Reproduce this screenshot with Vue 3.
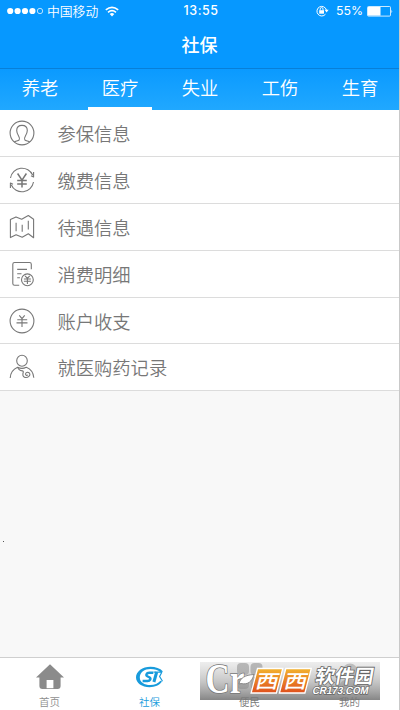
<script setup>
const tabs = ['养老', '医疗', '失业', '工伤', '生育']
const rows = [
  { icon: 'person', label: '参保信息' },
  { icon: 'pay', label: '缴费信息' },
  { icon: 'map', label: '待遇信息' },
  { icon: 'bill', label: '消费明细' },
  { icon: 'yen', label: '账户收支' },
  { icon: 'doctor', label: '就医购药记录' },
]
</script>

<template>
  <div class="screen">
    <header class="header">
      <div class="status">
        <div class="status-left">
          <svg class="dots" width="38" height="8" viewBox="0 0 38 8">
            <circle v-for="n in 4" :key="n" :cx="n * 7.4 - 4.2" cy="4" r="3.1" fill="#fff" />
            <circle cx="33" cy="4" r="2.7" fill="none" stroke="#fff" stroke-width=".7" />
          </svg>
          <span class="carrier">中国移动</span>
          <svg class="wifi" width="14" height="11" viewBox="0 0 14 11">
            <g fill="none" stroke="#fff" stroke-width="1.6">
              <path d="M.8 3.9Q7-1.3 13.2 3.9" />
              <path d="M3 6.3Q7 3 11 6.3" />
            </g>
            <path d="M4.7 8Q7 6.2 9.3 8L7 10.4Z" fill="#fff" />
          </svg>
        </div>
        <span class="time">13:55</span>
        <div class="status-right">
          <svg width="13" height="12" viewBox="0 0 13 12">
            <path d="M9.5 9.2A4.8 4.8 0 1 1 10.4 5" fill="none" stroke="#fff" stroke-width="1" />
            <path d="M8.6 4.8h4L10.6 7.4Z" fill="#fff" />
            <rect x="3.2" y="5.2" width="4.8" height="3.5" fill="#fff" />
            <path d="M4.2 5.4V4a1.4 1.4 0 0 1 2.8 0v1.4" fill="none" stroke="#fff" stroke-width=".9" />
          </svg>
          <span class="percent">55%</span>
          <svg class="battery" width="26" height="11" viewBox="0 0 26 11">
            <rect x=".5" y=".5" width="23" height="9.6" rx="1" fill="none" stroke="#fff" stroke-width=".8" />
            <rect x="1" y="1" width="12.5" height="8.6" fill="#fff" />
            <path d="M24.5 3.4q1.5 1.9 0 3.8Z" fill="#fff" />
          </svg>
        </div>
      </div>
      <h1 class="title">社保</h1>
    </header>

    <nav class="tabs">
      <div v-for="(tab, i) in tabs" :key="tab" class="tab" :class="{ active: i === 1 }">
        <span>{{ tab }}</span>
      </div>
    </nav>

    <ul class="list">
      <li v-for="row in rows" :key="row.icon" class="row">
        <svg class="row-icon" width="26" height="26" viewBox="0 0 26 26">
          <template v-if="row.icon === 'person'">
            <circle cx="13" cy="13" r="11.9" />
            <path d="M5.3 22.2c1-1.300 3.800-1 4.900-2.400.8-1 .2-2.400-.5-3.600C8.500 14.300 7.700 12.500 7.700 10.500 7.700 7.300 9.800 5.400 13 5.400s5.300 1.900 5.300 5.100c0 2-.8 3.800-2 5.700-.7 1.200-1.300 2.600-.5 3.600 1.100 1.400 3.900 1.100 4.900 2.400" />
          </template>
          <template v-else-if="row.icon === 'pay'">
            <path d="M1.500 11A11.700 11.700 0 0 1 23.800 8.300M24.500 15A11.700 11.700 0 0 1 2.200 17.700" />
            <path d="M24.600 5v5l-2.600-1.300M1.400 21v-5l2.600 1.300" />
            <path class="bold" d="m8.600 6.500 4.400 6.700 4.400-6.700M13 13v7.500M8.200 13.500h9.600M8.200 16.900h9.600" />
          </template>
          <template v-else-if="row.icon === 'map'">
            <path d="M1.400 5.600 7 2.900l5.700 2.400L19.300 1.500l5.300 3.700v18.500l-5.300-3.900-6.100 3.400-6.100-2.400-5.700 2.800Z" />
            <path d="M7.100 8.700v8.500M13.200 10.800v7M19.300 6.800v8.600" />
          </template>
          <template v-else-if="row.icon === 'bill'">
            <path d="M10.200 24.300H5.600a1.800 1.800 0 0 1-1.800-1.800V3.300a1.800 1.800 0 0 1 1.800-1.800h14.900a1.800 1.800 0 0 1 1.800 1.800v5" />
            <path d="M8.200 8.400h9.800M8.200 12.700h4.300M8.200 16.700h2.700" />
            <circle cx="18.400" cy="18.800" r="5.900" />
            <path d="m16.100 14.800 2.300 2.600 2.300-2.600M18.400 17.400V23M14.900 18h7M14.900 20.300h7" />
          </template>
          <template v-else-if="row.icon === 'yen'">
            <circle cx="13" cy="13" r="11.900" />
            <path d="m10.300 7.400 2.700 3.300 2.700-3.300M13 10.700v8.200M8.300 11.800h9.900M7.500 14.900h11" />
          </template>
          <template v-else>
            <ellipse cx="13" cy="6.800" rx="5.300" ry="5.500" />
            <path d="M1.200 24c.2-4.900 2.600-8.700 7.400-10.800 2.700 1.500 6 1.500 8.700 0 4.500 1.800 7.100 5.600 7.500 10.500" />
            <path d="M8.700 13.200c.6 2.700 2.500 3.400 4.700 3.700 1.600.4.700 1.600.5 2.900-.3 2.100.8 3.600 2.800 3.700 2.700.1 4.400-1.700 4.200-3.500-.3-2-3.700-2.300-4.300-.4-.4 1.600 1.300 2.400 2.100 1.100" />
          </template>
        </svg>
        <span class="row-label">{{ row.label }}</span>
      </li>
    </ul>

    <main class="blank"><span class="speck"></span></main>

    <footer class="tabbar">
      <div class="tabbar-item">
        <svg class="tabbar-icon" width="28" height="26" viewBox="0 0 28 26">
          <path fill="#8b8b8b" d="M14 .3 28 13.500h-3.400V22a3 3 0 0 1-3 3H6.400a3 3 0 0 1-3-3v-8.500H0Z" />
          <rect x="10.600" y="16" width="6.800" height="8.200" fill="#fff" />
        </svg>
        <span>首页</span>
      </div>
      <div class="tabbar-item current">
        <svg class="tabbar-icon" width="28" height="26" viewBox="0 0 28 26">
          <path fill="#189bdc" fill-rule="evenodd" d="M27 7.500C24 4.300 19.500 2.800 14.500 2.800 6.500 2.800 0 7.500 0 13.300c0 6 6 9.900 13.500 9.900 5.500 0 10-2 12.500-5.700l-1.500-.7c-2.500 2.800-6 4.200-10.300 4.200-5.800 0-10.400-2.800-10.400-7.600C3.800 8.500 8.500 5 14.500 5c4 0 7.500 1 10 3.200Z" />
          <path fill="none" stroke="#189bdc" stroke-width="2.400" d="M17.300 8.800h-4c-3 0-3.900 2.500-1.600 3.700l1.600.8c2.200 1.300.8 3.700-1.700 3.700H6.600" />
          <path fill="none" stroke="#189bdc" stroke-width="3" d="m20.700 8-2.800 10" />
          <path fill="none" stroke="#189bdc" stroke-width="1.200" d="M17.500 8.200h8.700M25.800 8.200l-2.200 4.300 2.900 4.700" />
        </svg>
        <span>社保</span>
      </div>
      <div class="tabbar-item">
        <svg class="tabbar-icon" width="28" height="26" viewBox="0 0 28 26">
          <g fill="#777">
            <rect x="1" y="-1" width="12" height="12" rx="4" />
            <rect x="14.500" y="-1" width="12" height="12" rx="4" />
            <rect x="1" y="13" width="12" height="12" rx="4" />
            <rect x="14.500" y="13" width="12" height="12" rx="4" />
          </g>
        </svg>
        <span class="over">便民</span>
      </div>
      <div class="tabbar-item">
        <svg class="tabbar-icon" width="28" height="26" viewBox="0 0 28 26">
          <circle cx="14" cy="7" r="7.500" fill="#8b8b8b" />
          <path d="M3 25q0-10 11-10t11 10Z" fill="#8b8b8b" />
        </svg>
        <span class="over">我的</span>
      </div>

      <svg class="watermark" width="180" height="38" viewBox="0 0 180 38">
        <defs>
          <linearGradient id="band" x1="0" y1="0" x2="0" y2="1">
            <stop offset="0" stop-color="#e2e2e2" stop-opacity=".6" />
            <stop offset=".5" stop-color="#b8b8b8" stop-opacity=".78" />
            <stop offset="1" stop-color="#828282" stop-opacity=".97" />
          </linearGradient>
          <linearGradient id="tile" x1="0" y1="0" x2="0" y2="1">
            <stop offset="0" stop-color="#f3b32e" />
            <stop offset="1" stop-color="#df4f1d" />
          </linearGradient>
        </defs>
        <rect width="180" height="38" fill="url(#band)" />
        <text class="mark-letters" x="5.500" y="31" textLength="39" lengthAdjust="spacingAndGlyphs">Cr</text>
        <path d="M39 22c1-6 6-9 15-9.500-2 7-6 10.500-13 9Z" fill="#fff" stroke="#777" stroke-width=".8" />
        <g stroke="#fff" stroke-width="1.300">
          <path d="M57.500 6.500h25.300L76.400 31H51.100Z" fill="url(#tile)" />
          <path d="M85.800 6.500h25.500L104.900 31H79.400Z" fill="url(#tile)" />
        </g>
        <g class="mark-tiles">
          <text transform="translate(54.500 26) skewX(-14) scale(1.100 .9)">西</text>
          <text transform="translate(83 26) skewX(-14) scale(1.100 .9)">西</text>
        </g>
        <text class="mark-name" transform="translate(114.500 20.500) skewX(-10)" textLength="58" lengthAdjust="spacingAndGlyphs">软件园</text>
        <text class="mark-site" transform="translate(112 31.800) skewX(-12)" textLength="56" lengthAdjust="spacingAndGlyphs">CR173.COM</text>
      </svg>
    </footer>
  </div>
</template>

<style>
body {
  margin: 0;
  background: #f8f8f8;
}
</style>

<style scoped>
.screen {
  box-sizing: border-box;
  width: 400px;
  height: 710px;
  display: flex;
  flex-direction: column;
  overflow: hidden;
  background: #f8f8f8;
  border-right: 1px solid #c9c9c9;
  font-family: "Noto Sans CJK SC", sans-serif;
}
.header {
  box-sizing: border-box;
  height: 69px;
  background: #0698ff;
  color: #fff;
  border-bottom: 1px solid #087fd8;
  flex: none;
}
.status {
  display: grid;
  grid-template-columns: 1fr auto 1fr;
  align-items: center;
  height: 22px;
  padding: 0 6px 0 7px;
  font-size: 12.800px;
  line-height: 22px;
}
.status-left,
.status-right {
  display: flex;
  align-items: center;
}
.status-right {
  justify-content: flex-end;
}
.carrier {
  margin-left: 2px;
  font-weight: 350;
}
.wifi {
  margin-left: 7px;
}
.time,
.percent {
  font-family: Inter, sans-serif;
  font-size: 12.500px;
}
.time {
  font-weight: 500;
  letter-spacing: .5px;
  padding-left: 2px;
}
.percent {
  margin: 0 4px 0 7px;
  font-size: 12.300px;
}
.title {
  margin: 0;
  height: 46px;
  text-align: center;
  font-size: 18px;
  font-weight: 500;
  line-height: 45px;
}
.tabs {
  flex: none;
  display: grid;
  grid-template-columns: repeat(5, 80px);
  height: 41px;
  background: linear-gradient(#0b9aff, #20a8ff);
  color: #fff;
}
.tab {
  display: flex;
  justify-content: center;
  font-size: 18.300px;
  font-weight: 350;
  line-height: 37px;
}
.active {
  margin: 0 8px;
  border-bottom: 3px solid #fff;
}
.list {
  flex: none;
  margin: 0;
  padding: 0;
  list-style: none;
  background: #fff;
}
.row {
  box-sizing: border-box;
  display: flex;
  align-items: center;
  height: 46.900px;
  padding-left: 9px;
  border-bottom: 1px solid #dcdcdc;
}
.row-icon {
  fill: none;
  stroke: #777;
  stroke-width: 1.100;
  stroke-linejoin: round;
}
.bold {
  stroke-width: 1.500;
}
.row-label {
  margin-left: 22.500px;
  color: #777;
  font-size: 18.300px;
  font-weight: 350;
  line-height: 44px;
}
.blank {
  flex: 1;
  padding: 150px 0 0 3px;
}
.speck {
  display: block;
  width: 1px;
  height: 1px;
  background: #555;
}
.tabbar {
  position: relative;
  box-sizing: border-box;
  flex: none;
  display: grid;
  grid-template-columns: repeat(4, 100px);
  height: 53px;
  background: #fff;
  border-top: 1px solid #cfcfcf;
}
.tabbar-item {
  display: flex;
  flex-direction: column;
  align-items: center;
  padding: 6px 1px 0 0;
  color: #8f8f8f;
  font-size: 10.500px;
  font-weight: 350;
  line-height: 16px;
}
.tabbar-icon {
  margin-bottom: 4px;
  overflow: visible;
}
.current {
  color: #189bdc;
}
.over {
  position: relative;
  z-index: 1;
  color: #777;
}
.watermark {
  position: absolute;
  left: 200px;
  top: 4px;
  overflow: visible;
}
.mark-letters {
  font-family: "Liberation Serif", serif;
  font-size: 43px;
  font-weight: 700;
  fill: #fff;
  stroke: #777;
  stroke-width: 1.600;
  paint-order: stroke;
}
.mark-tiles {
  fill: #fff;
  font-size: 21px;
  font-weight: 500;
}
.mark-name {
  fill: #fff;
  stroke: #666;
  stroke-width: 1.600;
  paint-order: stroke;
  font-size: 19px;
  font-weight: 700;
}
.mark-site {
  fill: #fff;
  stroke: #666;
  stroke-width: 1.400;
  paint-order: stroke;
  font-family: "Liberation Sans", sans-serif;
  font-size: 10.500px;
  font-weight: 700;
}
</style>
